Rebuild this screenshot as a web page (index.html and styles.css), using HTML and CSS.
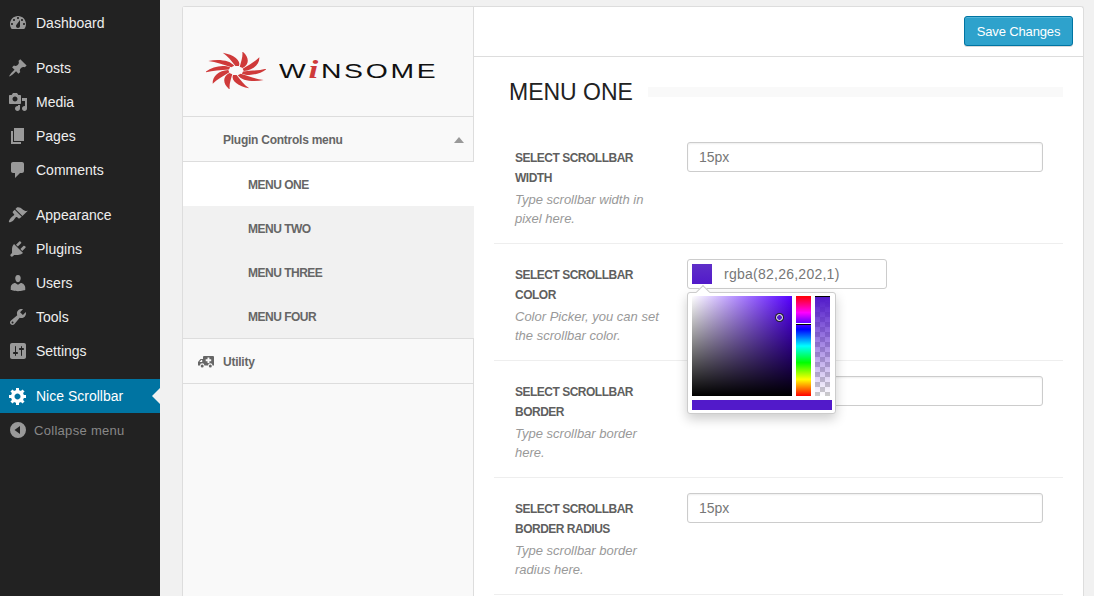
FILE: index.html
```html
<!DOCTYPE html>
<html lang="en">
<head>
  <meta charset="UTF-8">
  <title>Nice Scrollbar</title>
  <link rel="stylesheet" href="styles.css">
</head>
<body>
  <!-- WordPress admin menu -->
  <nav class="adminmenu">
    <a class="menu-item"><svg viewBox="0 0 20 20"><path fill-rule="evenodd" d="M3.76 16h12.48c1.1-1.37 1.76-3.11 1.76-5 0-4.42-3.58-8-8-8s-8 3.58-8 8c0 1.89.66 3.63 1.76 5zM10 4c.55 0 1 .45 1 1s-.45 1-1 1-1-.45-1-1 .45-1 1-1zM6 6c.55 0 1 .45 1 1s-.45 1-1 1-1-.45-1-1 .45-1 1-1zm8 0c.55 0 1 .45 1 1s-.45 1-1 1-1-.45-1-1 .45-1 1-1zm-5.37 5.55L12 7v6c0 1.1-.9 2-2 2s-2-.9-2-2c0-.57.24-1.08.63-1.45zM4 10c.55 0 1 .45 1 1s-.45 1-1 1-1-.45-1-1 .45-1 1-1zm12 0c.55 0 1 .45 1 1s-.45 1-1 1-1-.45-1-1 .45-1 1-1z"/></svg>Dashboard</a>
    <div class="menu-sep"></div>
    <a class="menu-item"><svg viewBox="0 0 20 20"><path d="M10.44 3.02l1.82-1.82 6.36 6.35-1.83 1.82c-1.05-.68-2.48-.57-3.41.36l-.75.75c-.92.93-1.04 2.35-.35 3.41l-1.83 1.82-2.41-2.41-2.8 2.79c-.42.42-3.38 2.71-3.8 2.29s1.86-3.39 2.28-3.81l2.79-2.79L4.1 9.36l1.83-1.82c1.05.69 2.48.57 3.4-.36l.75-.75c.93-.92 1.05-2.35.36-3.41z"/></svg>Posts</a>
    <a class="menu-item"><svg viewBox="0 0 20 20"><path fill-rule="evenodd" d="M13 11V4c0-.55-.45-1-1-1h-1.67L9 1H5L3.67 3H2c-.55 0-1 .45-1 1v7c0 .55.45 1 1 1h10c.55 0 1-.45 1-1zM7 4.5c1.38 0 2.5 1.12 2.5 2.5S8.38 9.5 7 9.5 4.5 8.38 4.5 7 5.62 4.5 7 4.5zM14 6h5v10.5c0 1.38-1.12 2.5-2.5 2.5S14 17.88 14 16.5s1.12-2.5 2.5-2.5c.17 0 .34.02.5.05V9h-3V6zm-4 8.05V13h2v3.5c0 1.38-1.12 2.5-2.5 2.5S7 17.88 7 16.5 8.12 14 9.5 14c.17 0 .34.02.5.05z"/></svg>Media</a>
    <a class="menu-item"><svg viewBox="0 0 20 20"><path d="M6 15V2h10v13H6zm-1 1h8v2H3V5h2v11z"/></svg>Pages</a>
    <a class="menu-item"><svg viewBox="0 0 20 20"><path d="M5 2h9c1.1 0 2 .9 2 2v7c0 1.1-.9 2-2 2h-2l-5 5v-5H5c-1.1 0-2-.9-2-2V4c0-1.1.9-2 2-2z"/></svg>Comments</a>
    <div class="menu-sep"></div>
    <a class="menu-item"><svg viewBox="0 0 20 20"><path d="M14.48 11.06L7.41 3.99l1.5-1.5c.5-.56 2.3-.47 3.51.32 1.21.8 1.43 1.28 2.91 2.1 1.18.64 2.45 1.26 4.45.85zm-.71.71L6.7 4.7 4.93 6.47c-.39.39-.39 1.02 0 1.41l1.06 1.06c.39.39.39 1.03 0 1.42-.6.6-1.43 1.11-2.21 1.69-.35.26-.7.53-1.01.84-1.35 1.35-2.27 3.81-1.77 4.31s2.96-.42 4.31-1.77c.31-.31.58-.66.84-1.01.58-.78 1.09-1.61 1.69-2.21.39-.39 1.02-.39 1.41 0l1.06 1.06c.39.39 1.02.39 1.41 0z"/></svg>Appearance</a>
    <a class="menu-item"><svg viewBox="0 0 20 20"><path d="M13.11 4.36L9.87 7.6 8 5.73l3.24-3.24c.35-.34 1.05-.2 1.56.32.52.51.66 1.21.31 1.55zm-8 1.77l.91-1.12 9.01 9.01-1.19.84c-.71.71-2.63 1.16-3.82 1.16H6.14L4.9 17.26c-.59.59-1.54.59-2.12 0-.59-.58-.59-1.53 0-2.12l1.24-1.24v-3.88c0-1.13.4-3.19 1.09-3.89zm7.26 3.97l3.24-3.24c.34-.35 1.04-.21 1.55.31.52.51.66 1.21.31 1.55l-3.24 3.25z"/></svg>Plugins</a>
    <a class="menu-item"><svg viewBox="0 0 20 20"><path d="M10 9.25c-2.27 0-2.73-3.44-2.73-3.44C7 4.02 7.82 2 9.97 2c2.16 0 2.98 2.02 2.71 3.81 0 0-.41 3.44-2.68 3.44zm0 2.57L12.72 10c2.39 0 4.52 2.33 4.52 4.53v2.49s-3.65 1.13-7.24 1.13c-3.65 0-7.24-1.13-7.24-1.13v-2.49c0-2.25 1.94-4.48 4.47-4.48z"/></svg>Users</a>
    <a class="menu-item"><svg viewBox="0 0 20 20"><path fill-rule="evenodd" d="M16.68 9.77c-1.34 1.34-3.3 1.67-4.95.99l-5.41 6.52c-.99.99-2.59.99-3.58 0s-.99-2.59 0-3.57l6.52-5.42c-.68-1.65-.35-3.61.99-4.95 1.28-1.28 3.12-1.62 4.72-1.06l-2.89 2.89 2.82 2.82 2.86-2.87c.53 1.58.18 3.39-1.08 4.65zM3.81 16.21c.4.39 1.04.39 1.43 0 .4-.4.4-1.04 0-1.43-.39-.4-1.03-.4-1.43 0-.39.39-.39 1.03 0 1.43z"/></svg>Tools</a>
    <a class="menu-item"><svg viewBox="0 0 20 20"><path fill-rule="evenodd" d="M18 16V4c0-1.1-.9-2-2-2H4c-1.1 0-2 .9-2 2v12c0 1.1.9 2 2 2h12c1.1 0 2-.9 2-2zM8 11h1c.55 0 1 .45 1 1s-.45 1-1 1H8v1.5c0 .28-.22.5-.5.5s-.5-.22-.5-.5V13H6c-.55 0-1-.45-1-1s.45-1 1-1h1V5.5c0-.28.22-.5.5-.5s.5.22.5.5V11zm5-2h-1c-.55 0-1-.45-1-1s.45-1 1-1h1V5.5c0-.28.22-.5.5-.5s.5.22.5.5V7h1c.55 0 1 .45 1 1s-.45 1-1 1h-1v5.5c0 .28-.22.5-.5.5s-.5-.22-.5-.5V9z"/></svg>Settings</a>
    <div class="menu-sep"></div>
    <a class="menu-item current"><svg viewBox="0 0 20 20"><path fill-rule="evenodd" d="M18 12h-2.18c-.17.7-.44 1.35-.81 1.93l1.54 1.54-2.1 2.1-1.54-1.54c-.58.36-1.23.63-1.91.79V19H8v-2.18c-.68-.16-1.33-.43-1.91-.79l-1.54 1.54-2.12-2.12 1.54-1.54c-.36-.58-.63-1.23-.79-1.91H1V9.03h2.17c.16-.7.44-1.35.8-1.94L2.43 5.55l2.1-2.1 1.54 1.54c.58-.37 1.24-.64 1.93-.81V2h3v2.18c.68.16 1.33.43 1.91.79l1.54-1.54 2.12 2.12-1.54 1.54c.36.59.64 1.24.8 1.94H18V12zm-8.5 1.5c1.66 0 3-1.34 3-3s-1.34-3-3-3-3 1.34-3 3 1.34 3 3 3z"/></svg>Nice Scrollbar</a>
    <a class="menu-item collapse"><svg viewBox="0 0 20 20"><path fill-rule="evenodd" d="M10 2a8 8 0 1 0 0 16 8 8 0 0 0 0-16zm2 4v8L6.5 10z"/></svg>Collapse menu</a>
  </nav>

  <div class="wrap">
    <div class="panel">
      <!-- plugin side menu -->
      <aside class="side">
        <div class="logo">
          <svg class="logo-mark" viewBox="-50 -50 100 100" preserveAspectRatio="none">
            <defs><path id="blade" d="M5 -12C9 -27 -4 -43 -22 -48C-13 -38 -8 -26 -1 -12Z"/></defs>
            <use href="#blade"/>
            <use href="#blade" transform="rotate(36)"/>
            <use href="#blade" transform="rotate(72)"/>
            <use href="#blade" transform="rotate(108)"/>
            <use href="#blade" transform="rotate(144)"/>
            <use href="#blade" transform="rotate(180)"/>
            <use href="#blade" transform="rotate(216)"/>
            <use href="#blade" transform="rotate(252)"/>
            <use href="#blade" transform="rotate(288)"/>
            <use href="#blade" transform="rotate(324)"/>
          </svg>
          <span class="logo-text">W<span class="logo-i">i</span>NSOME</span>
        </div>
        <div class="side-head">Plugin Controls menu<span class="caret"></span></div>
        <ul class="submenu">
          <li class="active">MENU ONE</li>
          <li>MENU TWO</li>
          <li>MENU THREE</li>
          <li>MENU FOUR</li>
        </ul>
        <div class="side-head utility">
          <svg class="ambulance" viewBox="0 0 16 12"><path fill-rule="evenodd" d="M6 0h9a1 1 0 0 1 1 1v8.500h-1.500a2.200 2.200 0 0 0-4.400 0H6.400a2.200 2.200 0 0 0-4.400 0H0V6l2.500-3H5V1a1 1 0 0 1 1-1zm3.500 1.500v1.800H7.700v1.900h1.800V7h1.900V5.200h1.800V3.300h-1.800V1.500zM1.500 6h2.700V4H3.200z"/><circle cx="4.200" cy="10" r="1.500"/><circle cx="12.300" cy="10" r="1.500"/></svg>
          Utility
        </div>
        <div class="side-rest"></div>
      </aside>

      <main class="main">
        <div class="topbar"><button class="save-btn">Save Changes</button></div>
        <div class="content">
          <div class="section-title">
            <h2>MENU ONE</h2>
            <span class="title-bar"></span>
          </div>

          <div class="row">
            <div class="row-label">
              <strong>SELECT SCROLLBAR WIDTH</strong>
              <em>Type scrollbar width in pixel here.</em>
            </div>
            <input class="text-input" type="text" value="15px">
          </div>

          <div class="row">
            <div class="row-label">
              <strong>SELECT SCROLLBAR COLOR</strong>
              <em>Color Picker, you can set the scrollbar color.</em>
            </div>
            <div class="color-field">
              <div class="color-input"><span class="swatch"></span>rgba(82,26,202,1)</div>
              <div class="picker">
                <div class="picker-cols">
                  <div class="sv"><span class="sv-dot"></span></div>
                  <div class="hue"><span class="hue-mark"></span></div>
                  <div class="alpha"></div>
                </div>
                <div class="picker-result"></div>
              </div>
            </div>
          </div>

          <div class="row">
            <div class="row-label">
              <strong>SELECT SCROLLBAR BORDER</strong>
              <em>Type scrollbar border here.</em>
            </div>
            <input class="text-input" type="text" value="1px">
          </div>

          <div class="row">
            <div class="row-label">
              <strong>SELECT SCROLLBAR BORDER RADIUS</strong>
              <em>Type scrollbar border radius here.</em>
            </div>
            <input class="text-input" type="text" value="15px">
          </div>
        </div>
      </main>
    </div>
  </div>
</body>
</html>
```
FILE: styles.css
```css
html, body {
  height: 100%;
  overflow: hidden;
}
body {
  margin: 0;
  display: flex;
  background-color: #f1f1f1;
  font-family: "Liberation Sans", Arial, sans-serif;
  font-size: 13px;
}

/* admin menu */
.adminmenu {
  flex: 0 0 160px;
  box-sizing: border-box;
  padding-top: 6px;
  background-color: #222;
}
.menu-item {
  position: relative;
  display: flex;
  align-items: center;
  height: 34px;
  font-size: 14px;
  color: #eee;
}
.menu-item svg {
  width: 20px;
  height: 20px;
  margin: 0 8px;
  fill: #999;
}
.menu-sep {
  height: 11px;
}
.menu-item.current {
  background-color: #0074a2;
  color: #fff;
}
.menu-item.current svg {
  fill: #fff;
}
.menu-item.current::after {
  content: "";
  position: absolute;
  right: 0;
  top: 50%;
  margin-top: -8px;
  border: 8px solid transparent;
  border-left-width: 0;
  border-right-color: #f1f1f1;
}
.menu-item.collapse {
  font-size: 13px;
  letter-spacing: .3px;
  color: #888;
}
.menu-item.collapse svg {
  margin-right: 6px;
}

/* panel */
.wrap {
  flex: 1;
  min-width: 0;
  box-sizing: border-box;
  height: 100%;
  padding: 6px 10px 0 22px;
}
.panel {
  display: flex;
  box-sizing: border-box;
  height: 100%;
  background-color: #fff;
  border: 1px solid #ddd;
  border-bottom: none;
  border-radius: 3px 3px 0 0;
}

/* side menu */
.side {
  flex: 0 0 291px;
  display: flex;
  flex-direction: column;
  background-color: #f9f9f9;
}
.logo {
  display: flex;
  align-items: center;
  box-sizing: border-box;
  height: 110px;
  padding: 18px 0 0 23px;
  border-right: 1px solid #ddd;
  border-bottom: 1px solid #ddd;
}
.logo-mark {
  width: 60px;
  height: 37px;
  fill: #cf3a3a;
}
.logo-text {
  margin-left: 13px;
  font-size: 21px;
  line-height: 1;
  letter-spacing: 2px;
  color: #111;
  transform: scaleX(1.35);
  transform-origin: left center;
}
.logo-i {
  font-family: "Liberation Serif", serif;
  font-style: italic;
  font-size: 26px;
  font-weight: bold;
  line-height: 0;
  color: #cf3a3a;
}
.side-head {
  position: relative;
  display: flex;
  align-items: center;
  box-sizing: border-box;
  height: 45px;
  padding: 2px 0 0 40px;
  border-right: 1px solid #ddd;
  border-bottom: 1px solid #ddd;
  font-size: 12px;
  font-weight: bold;
  letter-spacing: -.25px;
  color: #666;
}
.caret {
  position: absolute;
  right: 9px;
  top: 20px;
  border: 5px solid transparent;
  border-top-width: 0;
  border-bottom: 6px solid #999;
}
.submenu {
  margin: 0;
  padding: 0;
  list-style: none;
  background-color: #f1f1f1;
}
.submenu li {
  box-sizing: border-box;
  height: 44px;
  padding: 1px 0 0 65px;
  line-height: 44px;
  font-size: 12px;
  font-weight: bold;
  letter-spacing: -.5px;
  color: #666;
}
.submenu li.active {
  background-color: #fff;
}
.utility {
  padding-left: 15px;
  border-top: 1px solid #ddd;
  height: 46px;
}
.ambulance {
  width: 16px;
  height: 12px;
  margin-right: 9px;
  fill: #666;
}
.side-rest {
  flex: 1;
  border-right: 1px solid #ddd;
}

/* main column */
.main {
  flex: 1;
  min-width: 0;
}
.topbar {
  display: flex;
  justify-content: flex-end;
  box-sizing: border-box;
  height: 50px;
  padding: 9px 10px 0 0;
  border-bottom: 1px solid #ddd;
}
.save-btn {
  width: 109px;
  height: 30px;
  padding: 0;
  background-color: #2ea2cc;
  border: 1px solid #0074a2;
  border-radius: 3px;
  box-shadow: inset 0 1px 0 rgba(120,200,230,.5), 0 1px 0 rgba(0,0,0,.15);
  font-family: inherit;
  font-size: 13px;
  letter-spacing: -.15px;
  color: #fff;
}
.content {
  padding: 0 20px;
}
.section-title {
  display: flex;
  align-items: center;
  height: 70px;
  padding-left: 15px;
}
.section-title h2 {
  margin: 0 15px 0 0;
  font-size: 23px;
  font-weight: normal;
  color: #222;
}
.title-bar {
  flex: 1;
  height: 10px;
  background-color: #f9f9f9;
}
.row {
  display: flex;
  box-sizing: border-box;
  height: 117px;
  padding: 15px 20px 15px 21px;
  border-bottom: 1px solid #eee;
}
.row-label {
  flex: 0 0 172px;
  box-sizing: border-box;
  padding: 6px 20px 0 0;
}
.row-label strong {
  display: block;
  font-size: 12px;
  line-height: 20px;
  letter-spacing: -.5px;
  color: #5f5f5f;
}
.row-label em {
  display: block;
  margin-top: 2px;
  font-size: 13px;
  line-height: 19px;
  color: #999;
}
.text-input {
  flex: 1;
  box-sizing: border-box;
  min-width: 0;
  height: 30px;
  padding: 0 11px;
  background-color: #fff;
  border: 1px solid #ccc;
  border-radius: 3px;
  box-shadow: inset 0 1px 2px rgba(0,0,0,.07);
  font-family: inherit;
  font-size: 14px;
  color: #777;
}

/* colour picker */
.color-field {
  position: relative;
  flex: 1;
}
.color-input {
  display: flex;
  align-items: center;
  box-sizing: border-box;
  width: 200px;
  height: 30px;
  padding-left: 4px;
  background-color: #fff;
  border: 1px solid #ccc;
  border-radius: 3px;
  font-size: 14px;
  letter-spacing: .25px;
  color: #777;
}
.swatch {
  width: 20px;
  height: 20px;
  margin-right: 12px;
  background: linear-gradient(#5f2fc8, #521aca);
}
.picker {
  position: absolute;
  z-index: 5;
  top: 33px;
  left: 0;
  box-sizing: border-box;
  width: 149px;
  height: 122px;
  padding: 3px 3px 3px 4px;
  background-color: #fff;
  border: 1px solid #ccc;
  border-radius: 3px;
  box-shadow: 0 5px 12px rgba(0,0,0,.2);
}
.picker::before {
  content: "";
  position: absolute;
  top: -6px;
  left: 10px;
  width: 9px;
  height: 9px;
  background-color: #fff;
  border-top: 1px solid #ccc;
  border-left: 1px solid #ccc;
  transform: rotate(45deg);
}
.picker-cols {
  position: relative;
  display: flex;
  gap: 4px;
}
.sv {
  position: relative;
  width: 100px;
  height: 100px;
  background: linear-gradient(transparent, #000), linear-gradient(to right, #fff, #5500ff);
}
.sv-dot {
  position: absolute;
  left: 84px;
  top: 18px;
  width: 5px;
  height: 5px;
  background-color: #521aca;
  border: 1px solid #fff;
  border-radius: 50%;
  box-shadow: 0 0 0 1px #222;
}
.hue {
  position: relative;
  width: 15px;
  height: 100px;
  background: linear-gradient(#f00, #f0f, #00f, #0ff, #0f0, #ff0, #f00);
}
.hue-mark {
  position: absolute;
  left: 0;
  right: 0;
  top: 27px;
  height: 1px;
  background-color: #fff;
  border-bottom: 1px solid #000;
}
.alpha {
  width: 15px;
  height: 100px;
  border-top: 1px solid #000;
  box-sizing: border-box;
  background:
    linear-gradient(rgba(82,26,202,1), rgba(82,26,202,0)),
    conic-gradient(#ccc 25%, #fff 0 50%, #ccc 0 75%, #fff 0) 0 0 / 10px 10px;
}
.picker-result {
  width: 140px;
  height: 10px;
  margin-top: 4px;
  background-color: #521aca;
}
```
